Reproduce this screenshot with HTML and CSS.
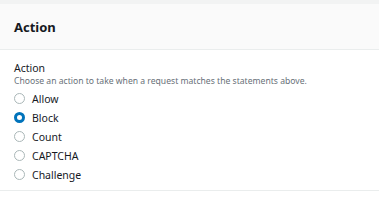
FILE: index.html
```html
<!DOCTYPE html>
<html lang="en">
  <head>
    <meta charset="UTF-8" />
    <meta name="viewport" content="width=device-width, initial-scale=1.0" />
    <title>Action</title>
    <link rel="stylesheet" href="styles.css">
  </head>
  <body>
    <div class="panel">
      <div class="panel-header">
        <h2>Action</h2>
      </div>
      <div class="panel-body">
        <div class="field-label">Action</div>
        <div class="field-desc">Choose an action to take when a request matches the statements above.</div>
        <div class="radio-group">
          <label class="radio"><input type="radio" name="action" value="allow" /><span class="dot"></span>Allow</label>
          <label class="radio"><input type="radio" name="action" value="block" checked /><span class="dot"></span>Block</label>
          <label class="radio"><input type="radio" name="action" value="count" /><span class="dot"></span>Count</label>
          <label class="radio"><input type="radio" name="action" value="captcha" /><span class="dot"></span>CAPTCHA</label>
          <label class="radio"><input type="radio" name="action" value="challenge" /><span class="dot"></span>Challenge</label>
        </div>
      </div>
    </div>
  </body>
</html>
```

FILE: styles.css
```css
body {
  margin: 0;
  padding-top: 4px;
  font-family: "Noto Sans", Arial, sans-serif;
  background-color: #f2f3f3;
  color: #16191f;
}
.panel {
  background-color: #fff;
  height: 209px;
}
.panel-header {
  background-color: #fafafa;
  border-bottom: 1px solid #eaeded;
  height: 45px;
  padding: 0 14px;
  display: flex;
  align-items: center;
}
.panel-header h2 {
  margin: 0;
  font-size: 13px;
  font-weight: 700;
}
.panel-body {
  padding: 11px 14px 6px;
  border-bottom: 1px solid #eaeded;
}
.field-label {
  font-size: 10.5px;
  line-height: 14px;
}
.field-desc {
  font-size: 8.6px;
  line-height: 12px;
  color: #687078;
}
.radio-group {
  margin-top: 2px;
}
.radio {
  display: flex;
  align-items: center;
  height: 19px;
  font-size: 10.5px;
  cursor: pointer;
}
.radio input {
  display: none;
}
.dot {
  box-sizing: border-box;
  width: 11px;
  height: 11px;
  border: 1px solid #aab7b8;
  border-radius: 50%;
  margin-right: 7px;
  background-color: #fff;
}
.radio input:checked + .dot {
  border: 3.5px solid #0073bb;
}
```
